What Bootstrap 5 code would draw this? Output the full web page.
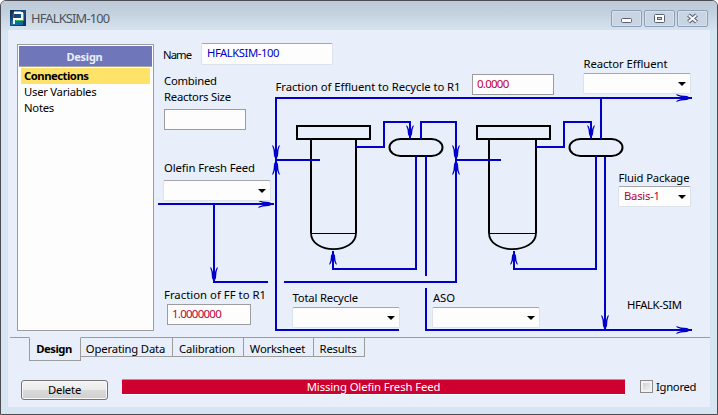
<!DOCTYPE html>
<html lang="en">
<head>
<meta charset="utf-8">
<meta name="viewport" content="width=device-width, initial-scale=1">
<title>HFALKSIM-100</title>
<link href="https://cdn.jsdelivr.net/npm/bootstrap@5.3.0/dist/css/bootstrap.min.css" rel="stylesheet">
<style>
body{font-family:"Noto Sans","Open Sans",sans-serif;font-size:11.3px;line-height:16px;color:#000;background:#fff;height:415px;width:718px;overflow:hidden}
.win{width:718px;height:415px;border:1px solid #4b4b52;border-radius:6px 6px 0 0;background:#d7e4f1;box-shadow:inset 0 1px 0 #e9f1f8;overflow:hidden}
.titlebar{height:29px;padding:8px 9px 0 9px;background:linear-gradient(#bfcbd9 2px,#c3d0de 40%,#d6e3ef)}
.caption{font-size:12.8px;line-height:19px;color:#4c535b;letter-spacing:-.78px;margin-left:5px}
.winbtns{gap:2px}
.winbtn{width:31px;height:17px;border:1px solid #8e9fba;border-radius:2px;background:#c9d5e3;box-shadow:inset 0 0 0 1px #d7e1ec;margin-top:1px}
.winbtn svg{display:block}
.client{margin:0 7px 7px 7px;width:702px;height:377px;background:#e8effa}
.work{height:307px}
.side{width:137px;height:287px;margin:14px 0 0 9px;border:1px solid #9c9c9c;background:#fdfdfd;padding:1px}
.side-head{height:20px;font-size:11px;line-height:22px;background:#7076ba;color:#e8effa;letter-spacing:-.25px;padding-right:2px}
.side-list{border-top:1px solid #a6a6a6;padding:1px 2px 0}
.side-list .list-group-item{border:0;padding:0 0 0 3px;height:16px;line-height:16px;background:transparent;color:#000;letter-spacing:-.27px}
.side-list .list-group-item.active{background:#ffe268;font-weight:700;font-size:11.3px;letter-spacing:-.5px;margin-top:0}
.sheet{width:556px;height:307px}
.sheet svg{display:block}
.sheet text{font-size:11.3px;fill:#000}
.box,.pick{position:absolute;background:#fdfdfd;height:21px;line-height:18px;padding-left:5px;font-size:11.3px;white-space:nowrap}
.box{border:1px solid #9c9c9c;color:#c00038;width:82px;font-size:11.5px;letter-spacing:-.75px;padding-left:4px}
.pick{border:1px solid #dde2ea;border-top-color:#a5a7ab;border-radius:2px;width:108px;color:#c00038;letter-spacing:-.25px}
.pick::after{content:"";position:absolute;right:4px;top:8px;border:4px solid transparent;border-top-color:#000;border-bottom:0}
/* Places of the fields on the flowsheet canvas */
.name-box{left:47px;top:13px;width:132px;height:22px;color:#0000c8;letter-spacing:-.46px}
.name-box::after{display:none}
.size-box{left:10px;top:79px}
.recycle-box{left:318px;top:44px}
.feed-box{left:13px;top:274px;width:84px}
.effluent{left:429px;top:43px}
.olefin{left:9px;top:150px}
.fluid{left:464px;top:156px;width:73px}
.total{left:138px;top:277px}
.aso{left:278px;top:277px}
.tabs{height:24px;margin-left:2px;width:700px}
.tabs .rule{border-top:1px solid #9c9c9c}
.tabs .rule-lead{width:19px}
.tabs .nav-link{padding:0 2px 0 0;height:20px;line-height:22px;border:1px solid #9c9c9c;border-left:0;border-radius:0;color:#000;text-align:center;white-space:nowrap;letter-spacing:-.18px}
.tabs .nav-link.active{width:52px;height:24px;border:1px solid #9c9c9c;border-top-color:transparent;background:transparent;font-weight:700;font-size:11.3px;letter-spacing:-.5px;padding-right:2px}
.tab-op{width:92px}.tab-cal{width:71px}.tab-work{width:70px}.tab-res{width:51px}
.foot{padding:18px 12px 0 13px}
.del{width:87px;height:20px;padding:0;margin-top:1px;line-height:18px;font-size:11.3px;border:1px solid #747474;border-radius:3px;background:linear-gradient(#f3f3f3,#ebebeb 48%,#dadada 52%,#cfcfcf);box-shadow:inset 0 0 0 1px #f8f8f8;letter-spacing:-.2px;color:#000;flex-shrink:0}
.status{width:503px;height:16px;flex-shrink:0;margin-left:14px;background:#cd0030;border-top:1px solid #9c9c9c;border-bottom:1px solid #fff;line-height:14px;color:#fff;letter-spacing:-.1px}
.chk{width:13px;height:13px;flex-shrink:0;border:1px solid #8b8b8b;background:linear-gradient(135deg,#c8ccd0,#f5f5f5);box-shadow:inset 0 0 0 2px #f2f2f2;margin:1px 3px 0 15px}
.ign{letter-spacing:-.3px}
</style>
<script src="https://cdn.jsdelivr.net/npm/bootstrap@5.3.0/dist/js/bootstrap.bundle.min.js"></script>
</head>
<body>
<div class="win">
  <div class="titlebar d-flex align-items-start">
    <svg width="16" height="17" viewBox="0 0 16 17">
      <defs><linearGradient id="lg" x1="0" y1="0" x2="1" y2="1"><stop offset="0" stop-color="#0d2a52"/><stop offset=".5" stop-color="#14508a"/><stop offset="1" stop-color="#0a2c5c"/></linearGradient></defs>
      <rect y="1" width="16" height="16" fill="url(#lg)"/>
      <path d="M1 11H13V16H1z" fill="#1a9ed0" opacity=".45"/>
      <path d="M3.500 9V3.500" stroke="#e02b2b" stroke-width="1.200" fill="none"/>
      <path d="M4 4H12V10H4V15" stroke="#fff" stroke-width="2" fill="none"/>
      <path d="M4 2.500H11" stroke="#f2707a" fill="none"/>
      <path d="M13.500 4V11.500H6" stroke="#47b84e" fill="none"/>
    </svg>
    <div class="caption">HFALKSIM-100</div>
    <div class="winbtns d-flex ms-auto">
      <div class="winbtn"><svg width="29" height="15"><rect x="9.500" y="7.500" width="10" height="4" rx="1" fill="#fff" stroke="#5b5f72"/></svg></div>
      <div class="winbtn"><svg width="29" height="15"><rect x="9.500" y="3.500" width="10" height="8" rx="1" fill="#fff" stroke="#5b5f72"/><rect x="12.500" y="6.500" width="4" height="2" fill="#c9d5e3" stroke="#5b5f72"/></svg></div>
      <div class="winbtn"><svg width="29" height="15"><path d="M10.500 4L18.500 11M18.500 4L10.500 11" stroke="#5b5f72" stroke-width="4.200"/><path d="M10.700 4.200L18.300 10.800M18.300 4.200L10.700 10.800" stroke="#f4f6f8" stroke-width="2"/></svg></div>
    </div>
  </div>
  <div class="client d-flex flex-column">
    <div class="work d-flex">
      <div class="side flex-shrink-0">
        <div class="side-head text-center fw-bold">Design</div>
        <div class="list-group list-group-flush side-list">
          <div class="list-group-item active">Connections</div>
          <div class="list-group-item">User Variables</div>
          <div class="list-group-item">Notes</div>
        </div>
      </div>
      <div class="sheet position-relative flex-shrink-0">
        <svg width="556" height="307" viewBox="154 30 556 307">
          <defs><path id="head" d="M-1-4L4-2.500 10-2 12-1H15V1H12L10 2 4 2.500-1 4 0 2.500 4 1V-1L0-2.500Z" fill="#0000c8"/></defs>
          <g fill="none" stroke="#000" stroke-width="2">
            <rect x="297" y="126" width="73" height="13"/>
            <path d="M311 139V233M356 139V233"/>
            <path d="M311 233C311 254.500 356 254.500 356 233" stroke-width="1.800"/>
            <path d="M311 233.500H356" stroke-width="1"/>
            <rect x="477" y="126" width="73" height="13"/>
            <path d="M489 139V233M536 139V233"/>
            <path d="M489 233C489 254.500 536 254.500 536 233" stroke-width="1.800"/>
            <path d="M489 233.500H536" stroke-width="1"/>
            <rect x="389.500" y="139" width="53" height="17" rx="11" ry="8.500"/>
            <rect x="569.500" y="139" width="53" height="17" rx="11" ry="8.500"/>
          </g>
          <g fill="none" stroke="#0000c8" stroke-width="2">
            <path d="M692 98H276V330H399"/>
            <path d="M276 160H320M456 160H501"/>
            <path d="M356 147H384V122H410V138"/>
            <path d="M421 139V122H456V282H284"/>
            <path d="M416 156V269H333V251"/>
            <path d="M426 156V276M426 288V330H692"/>
            <path d="M536 147H564V122H591V138"/>
            <path d="M601 98V139"/>
            <path d="M596 156V269H514V251"/>
            <path d="M605 157V330"/>
            <path d="M158 204H274M214 204V282H268"/>
          </g>
          <use href="#head" x="677" y="98"/>
          <use href="#head" x="677" y="330"/>
          <use href="#head" x="259" y="204"/>
          <use href="#head" transform="translate(276 146) rotate(90)"/>
          <use href="#head" transform="translate(456 146) rotate(90)"/>
          <use href="#head" transform="translate(410 126) rotate(90) scale(.85 1)"/>
          <use href="#head" transform="translate(591 126) rotate(90) scale(.85 1)"/>
          <use href="#head" transform="translate(214 268) rotate(90)"/>
          <use href="#head" transform="translate(605 316) rotate(90)"/>
          <use href="#head" transform="translate(276 174) rotate(-90)"/>
          <use href="#head" transform="translate(456 174) rotate(-90)"/>
          <use href="#head" transform="translate(333 264) rotate(-90) scale(.85 1)"/>
          <use href="#head" transform="translate(514 264) rotate(-90) scale(.85 1)"/>
          <text x="163" y="59" textLength="29">Name</text>
          <text x="164" y="85" textLength="53">Combined</text>
          <text x="164" y="101" textLength="67">Reactors Size</text>
          <text x="275.500" y="91" textLength="185">Fraction of Effluent to Recycle to R1</text>
          <text x="583.500" y="68" textLength="84">Reactor Effluent</text>
          <text x="164" y="172" textLength="91">Olefin Fresh Feed</text>
          <text x="618.500" y="182" textLength="71">Fluid Package</text>
          <text x="164" y="299" textLength="102">Fraction of FF to R1</text>
          <text x="292.500" y="302" textLength="65.500">Total Recycle</text>
          <text x="433" y="302" textLength="22">ASO</text>
          <text x="627" y="309" textLength="55">HFALK-SIM</text>
        </svg>
        <div class="pick name-box">HFALKSIM-100</div>
        <div class="box size-box"></div>
        <div class="box recycle-box">0.0000</div>
        <div class="box feed-box">1.0000000</div>
        <div class="pick effluent"></div>
        <div class="pick olefin"></div>
        <div class="pick fluid">Basis-1</div>
        <div class="pick total"></div>
        <div class="pick aso"></div>
      </div>
    </div>
    <div class="tabs d-flex">
      <div class="rule rule-lead"></div>
      <a class="nav-link active">Design</a>
      <a class="nav-link tab-op">Operating Data</a>
      <a class="nav-link tab-cal">Calibration</a>
      <a class="nav-link tab-work">Worksheet</a>
      <a class="nav-link tab-res">Results</a>
      <div class="rule flex-grow-1"></div>
    </div>
    <div class="foot d-flex align-items-start">
      <button class="btn del">Delete</button>
      <div class="status text-center">Missing Olefin Fresh Feed</div>
      <div class="chk"></div>
      <div class="ign">Ignored</div>
    </div>
  </div>
</div>
</body>
</html>
